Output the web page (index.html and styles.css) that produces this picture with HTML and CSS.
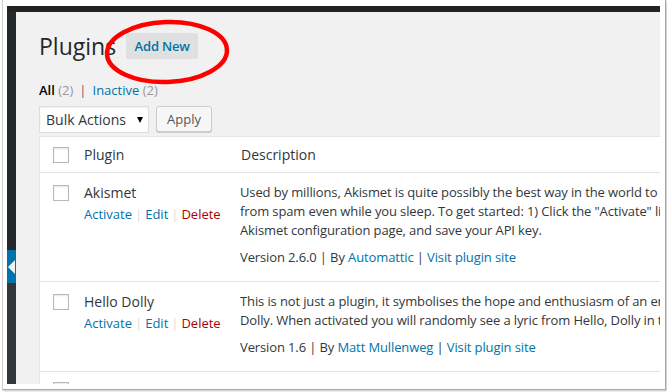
FILE: index.html
```html
<html>
    <head>
        <link rel="stylesheet" href="styles.css">
    </head>
    <body>
        <div class="frame">
            <div class="screen">
                <div class="adminbar"></div>
                <div class="wrap">
                    <div class="sidebar">
                        <div class="menu-top"></div>
                        <div class="menu-current"><span class="menu-arrow"></span></div>
                        <div class="menu-rest"></div>
                    </div>
                    <div class="content">
                        <div class="title-row">
                            <h1>Plugins</h1>
                            <a class="add-new" href="#">Add New</a>
                        </div>
                        <div class="filters">
                            <a class="current" href="#">All <span class="count">(2)</span></a><span class="bar">|</span><a href="#">Inactive <span class="count">(2)</span></a>
                        </div>
                        <div class="tablenav">
                            <div class="select">Bulk Actions <span class="caret"></span></div>
                            <button class="apply" type="button">Apply</button>
                        </div>
                        <div class="plugins">
                            <div class="row head">
                                <div class="check"><span class="box"></span></div>
                                <div>Plugin</div>
                                <div class="desc-head">Description</div>
                            </div>
                            <div class="row">
                                <div class="check"><span class="box"></span></div>
                                <div>
                                    <div class="name">Akismet</div>
                                    <div class="actions"><a href="#">Activate</a><span class="sep">|</span><a href="#">Edit</a><span class="sep">|</span><a class="delete" href="#">Delete</a></div>
                                </div>
                                <div class="desc">
                                    <p>Used by millions, Akismet is quite possibly the best way in the world to protect your blog from comment and trackback spam. It keeps your site protected<br>from spam even while you sleep. To get started: 1) Click the "Activate" link to the left of this description, 2) Sign up for an Akismet API key, and 3) Go to your<br>Akismet configuration page, and save your API key.</p>
                                    <p class="version">Version 2.6.0 | By <a href="#">Automattic</a> | <a href="#">Visit plugin site</a></p>
                                </div>
                            </div>
                            <div class="row">
                                <div class="check"><span class="box"></span></div>
                                <div>
                                    <div class="name">Hello Dolly</div>
                                    <div class="actions"><a href="#">Activate</a><span class="sep">|</span><a href="#">Edit</a><span class="sep">|</span><a class="delete" href="#">Delete</a></div>
                                </div>
                                <div class="desc">
                                    <p>This is not just a plugin, it symbolises the hope and enthusiasm of an entire generation summed up in two words sung most famously by Louis Armstrong: Hello,<br>Dolly. When activated you will randomly see a lyric from Hello, Dolly in the upper right of your admin screen on every page.</p>
                                    <p class="version">Version 1.6 | By <a href="#">Matt Mullenweg</a> | <a href="#">Visit plugin site</a></p>
                                </div>
                            </div>
                            <div class="row foot">
                                <div class="check"><span class="box"></span></div>
                                <div>Plugin</div>
                                <div class="desc-head">Description</div>
                            </div>
                        </div>
                    </div>
                </div>
                <svg class="circle" width="653" height="378" viewBox="0 0 653 378">
                    <ellipse cx="160" cy="46" rx="60" ry="30" transform="rotate(-2 160 46)" fill="none" stroke="#ff0000" stroke-width="4.5"/>
                </svg>
            </div>
        </div>
    </body>
</html>
```

FILE: styles.css
```css
* {
    box-sizing: border-box;
}

body {
    margin: 0;
    background: #fff;
    font-family: "Open Sans", "Liberation Sans", sans-serif;
    color: #32373c;
}

a {
    color: #0073aa;
    text-decoration: none;
}

.frame {
    margin-left: 2px;
    width: 664px;
    padding: 6px 5px 5px 4px;
    border: 1px solid #a8a8a8;
    border-top: 0;
    border-left-color: #d0d0d0;
    box-shadow: 1px 1px 2px rgba(0, 0, 0, 0.25);
}

.screen {
    position: relative;
    height: 378px;
    overflow: hidden;
    display: flex;
    flex-direction: column;
}

.adminbar {
    height: 6px;
    flex: none;
    background: #222;
}

.wrap {
    flex: 1;
    display: flex;
    min-height: 0;
}

.sidebar {
    width: 9px;
    flex: none;
    display: flex;
    flex-direction: column;
    background: #23282d;
}

.menu-top {
    height: 238px;
}

.menu-current {
    height: 33px;
    background: #0073aa;
    display: flex;
    align-items: center;
    justify-content: flex-end;
    padding-right: 1px;
}

.menu-arrow {
    width: 0;
    height: 0;
    border-top: 7.5px solid transparent;
    border-bottom: 7.5px solid transparent;
    border-right: 7px solid #f1f1f1;
}

.menu-rest {
    flex: 1;
    background: #32373c;
}

.content {
    flex: 1;
    min-width: 0;
    background: #f1f1f1;
    padding: 21px 0 0 23px;
}

.title-row {
    display: flex;
    align-items: center;
    height: 26px;
}

h1 {
    margin: 0;
    font-size: 23px;
    font-weight: 400;
    line-height: 26px;
    color: #23282d;
}

.add-new {
    margin-left: 10px;
    width: 72px;
    height: 26px;
    line-height: 26px;
    text-align: center;
    font-size: 13px;
    font-weight: 600;
    letter-spacing: -0.2px;
    background: #e0e0e0;
    border-radius: 2px;
}

.filters {
    margin-top: 20px;
    font-size: 13px;
    line-height: 22px;
    color: #555;
}

.filters .current {
    color: #000;
    font-weight: 600;
}

.count {
    color: #999;
    font-weight: 400;
}

.bar {
    margin: 0 6px;
    color: #666;
}

.tablenav {
    margin-top: 5px;
    display: flex;
    gap: 7px;
    height: 27px;
}

.select {
    width: 110px;
    height: 27px;
    display: flex;
    align-items: center;
    justify-content: space-between;
    padding: 0 5px 0 6px;
    font-size: 14px;
    background: #fff;
    border: 1px solid #ddd;
    box-shadow: inset 0 1px 2px rgba(0, 0, 0, 0.07);
}

.caret {
    width: 0;
    height: 0;
    border-left: 3.5px solid transparent;
    border-right: 3.5px solid transparent;
    border-top: 6px solid #000;
}

.apply {
    width: 56px;
    height: 26px;
    padding: 0;
    font-family: inherit;
    font-size: 13px;
    color: #555;
    background: #f7f7f7;
    border: 1px solid #ccc;
    border-radius: 3px;
    box-shadow: 0 1px 0 #ccc;
}

.plugins {
    margin-top: 3px;
    width: 1000px;
    background: #fff;
    border: 1px solid #e5e5e5;
}

.row {
    display: grid;
    grid-template-columns: 44px 156px 1fr;
    padding: 10px 0 14px;
    border-bottom: 1px solid #e1e1e1;
}

.row.head,
.row.foot {
    height: 36px;
    padding: 0;
    align-items: center;
    font-size: 14px;
}

.desc-head {
    padding-left: 1px;
}

.check {
    padding-left: 13px;
}

.box {
    display: block;
    width: 16px;
    height: 16px;
    border: 1px solid #b4b9be;
    background: #fff;
    box-shadow: inset 0 1px 2px rgba(0, 0, 0, 0.1);
}

.row:not(.head):not(.foot) .box {
    margin-top: 2px;
}

.name {
    font-size: 14px;
    line-height: 19px;
}

.actions {
    margin-top: 3px;
    font-size: 13px;
    line-height: 19px;
}

.sep {
    margin: 0 3px;
    color: #ddd;
}

.delete {
    color: #a00;
}

.desc {
    font-size: 13px;
    line-height: 19px;
    letter-spacing: -0.12px;
    white-space: nowrap;
}

.desc p {
    margin: 0;
}

.desc .version {
    margin-top: 8px;
}

.circle {
    position: absolute;
    left: 0;
    top: 0;
    pointer-events: none;
}
```
